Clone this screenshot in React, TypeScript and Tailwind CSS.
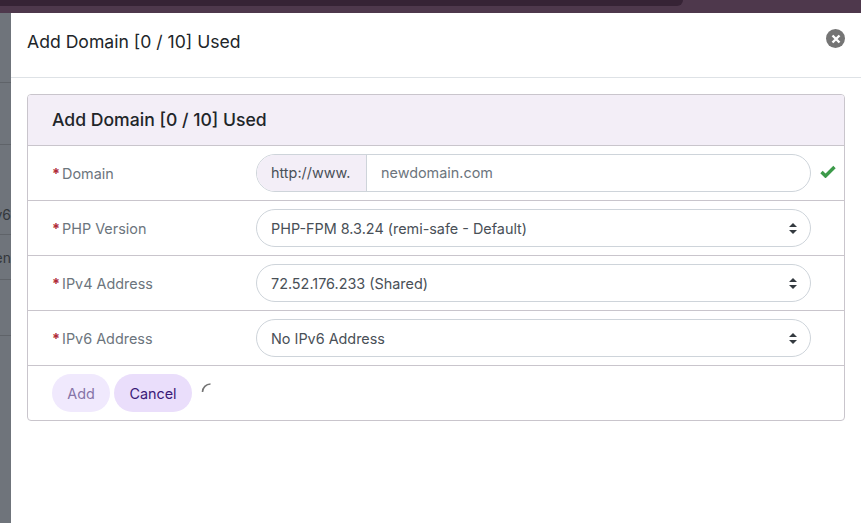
const font = { fontFamily: 'Inter, sans-serif' }

const selectRows = [
  { label: 'PHP Version', value: 'PHP-FPM 8.3.24 (remi-safe - Default)' },
  { label: 'IPv4 Address', value: '72.52.176.233 (Shared)' },
  { label: 'IPv6 Address', value: 'No IPv6 Address' },
]

function RowLabel({ text }: { text: string }) {
  return (
    <div className="w-[204px] shrink-0 text-[14.4px] leading-[22px] text-[#6c757d] mt-[1px]">
      <span className="text-[#b02a37] font-bold mr-[2px]">*</span>
      {text}
    </div>
  )
}

function SelectArrows() {
  return (
    <svg width="10" height="13" viewBox="0 0 10 13" className="text-[#343a40]">
      <path d="M1 5 L5 1 L9 5 Z M1 8 L5 12 L9 8 Z" fill="currentColor" />
    </svg>
  )
}

export default function App() {
  return (
    <div style={font} className="w-[861px] h-[523px] overflow-hidden flex flex-col bg-white">
      {/* page behind the modal */}
      <div className="h-[13px] shrink-0 bg-[#4e384c] flex flex-col">
        <div className="h-[6px] w-[683px] bg-[#362335] rounded-br-lg" />
      </div>
      <div className="flex flex-1 min-h-0">
        <div className="w-[11px] shrink-0 bg-[#6f747b] flex flex-col text-[14px] text-[#33373b] overflow-hidden">
          <div className="h-[70px] shrink-0 border-b border-[#5f6369]" />
          <div className="h-[62px] shrink-0 border-b border-[#5f6369]" />
          <div className="h-[90px] shrink-0 border-b border-[#5f6369] flex items-end justify-end pb-[9px] whitespace-nowrap">v6</div>
          <div className="h-[45px] shrink-0 border-b border-[#5f6369] flex items-center justify-end whitespace-nowrap">en</div>
          <div className="h-[56px] shrink-0 border-b border-[#5f6369]" />
        </div>

        <div className="flex-1 min-w-0 flex flex-col">
          <div className="h-[65px] shrink-0 border-b border-[#dee2e6] pl-4 pr-4 flex justify-between items-start">
            <h2 className="text-[17.6px] leading-[58px] text-[#212529]">Add Domain [0 / 10] Used</h2>
            <div className="w-[19px] h-[19px] mt-[16px] rounded-full bg-[#757575] flex items-center justify-center">
              <svg width="10" height="10" viewBox="0 0 10 10">
                <path d="M1.5 1.5 L8.5 8.5 M8.5 1.5 L1.5 8.5" stroke="white" strokeWidth="2.4" />
              </svg>
            </div>
          </div>

          <div className="ml-4 mt-4 w-[818px] h-[327px] border border-[#c9c5cc] rounded-[4px] flex flex-col overflow-hidden">
            <div className="h-[51px] shrink-0 bg-[#f3eef7] border-b border-[#c9c5cc] pl-6 flex items-center">
              <h3 className="text-[17.6px] font-medium text-[#212529] mt-[1px]">Add Domain [0 / 10] Used</h3>
            </div>

            <div className="h-[55px] shrink-0 border-b border-[#c9c5cc] pl-6 flex items-center">
              <RowLabel text="Domain" />
              <div className="w-[555px] h-[38px] border border-[#ced4da] rounded-full flex overflow-hidden text-[14.4px]">
                <div className="w-[110px] bg-[#f3eef7] border-r border-[#ced4da] flex items-center pl-[14px] text-[#495057]">http://www.</div>
                <div className="flex-1 flex items-center pl-[14px] text-[#6c757d]">newdomain.com</div>
              </div>
              <svg width="16" height="13" viewBox="0 0 16 13" className="ml-[9px] -mt-[3px]">
                <path d="M1.5 7 L5.5 11 L14.5 2" fill="none" stroke="#3c9a4a" strokeWidth="3.4" />
              </svg>
            </div>

            {selectRows.map((row) => (
              <div key={row.label} className="h-[55px] shrink-0 border-b border-[#c9c5cc] pl-6 flex items-center">
                <RowLabel text={row.label} />
                <div className="w-[555px] h-[38px] border border-[#ced4da] rounded-full flex items-center justify-between pl-[14px] pr-[12px] text-[14.4px] text-[#495057]">
                  <span className="mt-[1px]">{row.value}</span>
                  <SelectArrows />
                </div>
              </div>
            ))}

            <div className="flex-1 pl-6 flex items-center gap-[4px] text-[14.4px]">
              <button className="w-[58px] h-[38px] pt-[1px] rounded-full bg-[#f0e9fd] text-[#8674a8]">Add</button>
              <button className="w-[78px] h-[38px] pt-[1px] rounded-full bg-[#eadefb] text-[#3b1a78]">Cancel</button>
              <svg width="12" height="12" viewBox="0 0 12 12" className="ml-[5px] mb-[11px]">
                <path d="M1.5 10 A8 8 0 0 1 9.5 2" fill="none" stroke="#757575" strokeWidth="1.6" />
              </svg>
            </div>
          </div>
        </div>
      </div>
    </div>
  )
}
